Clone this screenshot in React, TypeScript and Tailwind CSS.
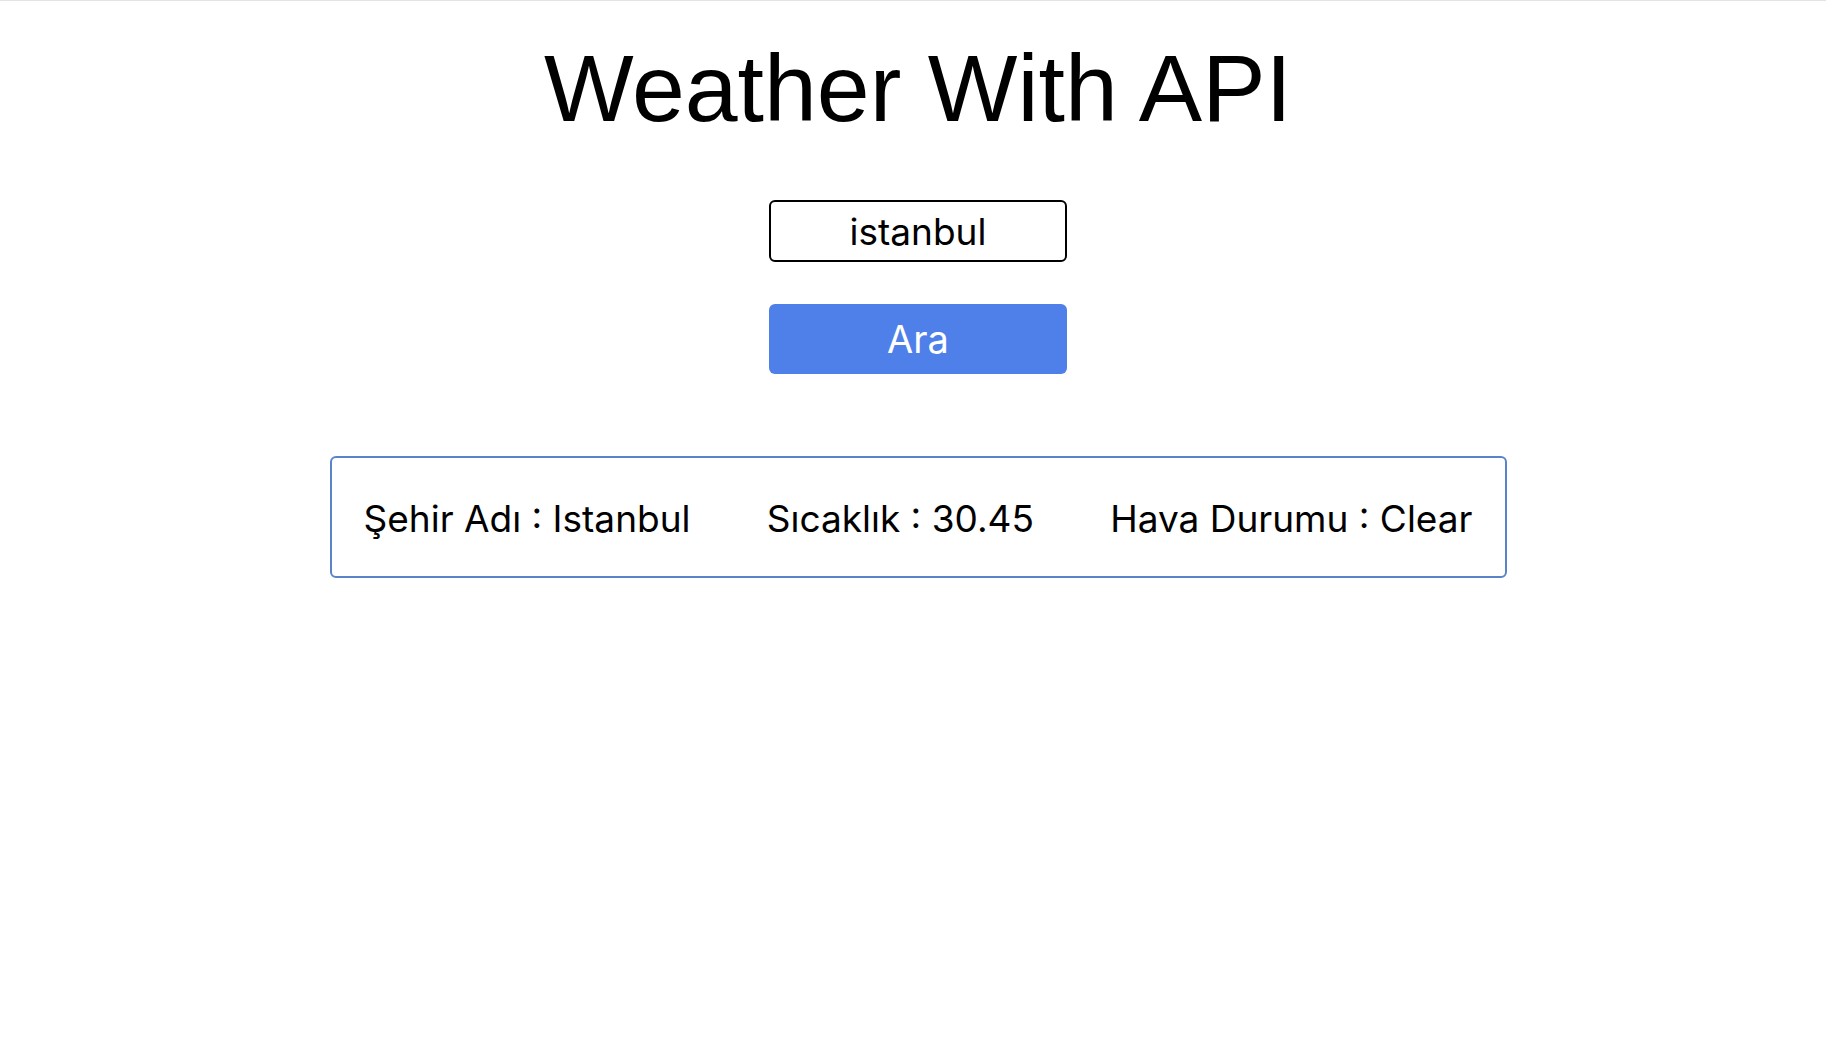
import React, { useState } from "react";

const App: React.FC = () => {
  const [city, setCity] = useState<string>("istanbul");

  return (
    <div className="min-h-screen w-full border-t border-[#e3e3e3] bg-white">
      <div className="flex flex-col items-center pl-[10px]">
        <h1 className="mt-[40px] text-[95px] leading-none text-black [font-family:'Liberation_Sans',Arial,sans-serif]">
          Weather With API
        </h1>

        {/* search */}
        <input
          type="text"
          value={city}
          onChange={(e) => setCity(e.target.value)}
          className="mt-[64px] h-[62px] w-[298px] rounded-[6px] border-2 border-black bg-white text-center text-[37px] text-black outline-none [font-family:Inter,'Noto_Sans',sans-serif]"
        />
        <button
          type="button"
          className="mt-[42px] h-[70px] w-[298px] rounded-[6px] bg-[#4f80ea] text-[38px] text-white [font-family:Inter,'Noto_Sans',sans-serif]"
        >
          Ara
        </button>

        {/* result */}
        <div className="mt-[82px] flex h-[122px] w-[1177px] items-center justify-between rounded-[6px] border-2 border-[#5b83c9] px-[32px] pt-[4px] text-[37px] text-black [font-family:Inter,'Noto_Sans',sans-serif]">
          <span>Şehir Adı : Istanbul</span>
          <span>Sıcaklık : 30.45</span>
          <span>Hava Durumu : Clear</span>
        </div>
      </div>
    </div>
  );
};

export default App;
